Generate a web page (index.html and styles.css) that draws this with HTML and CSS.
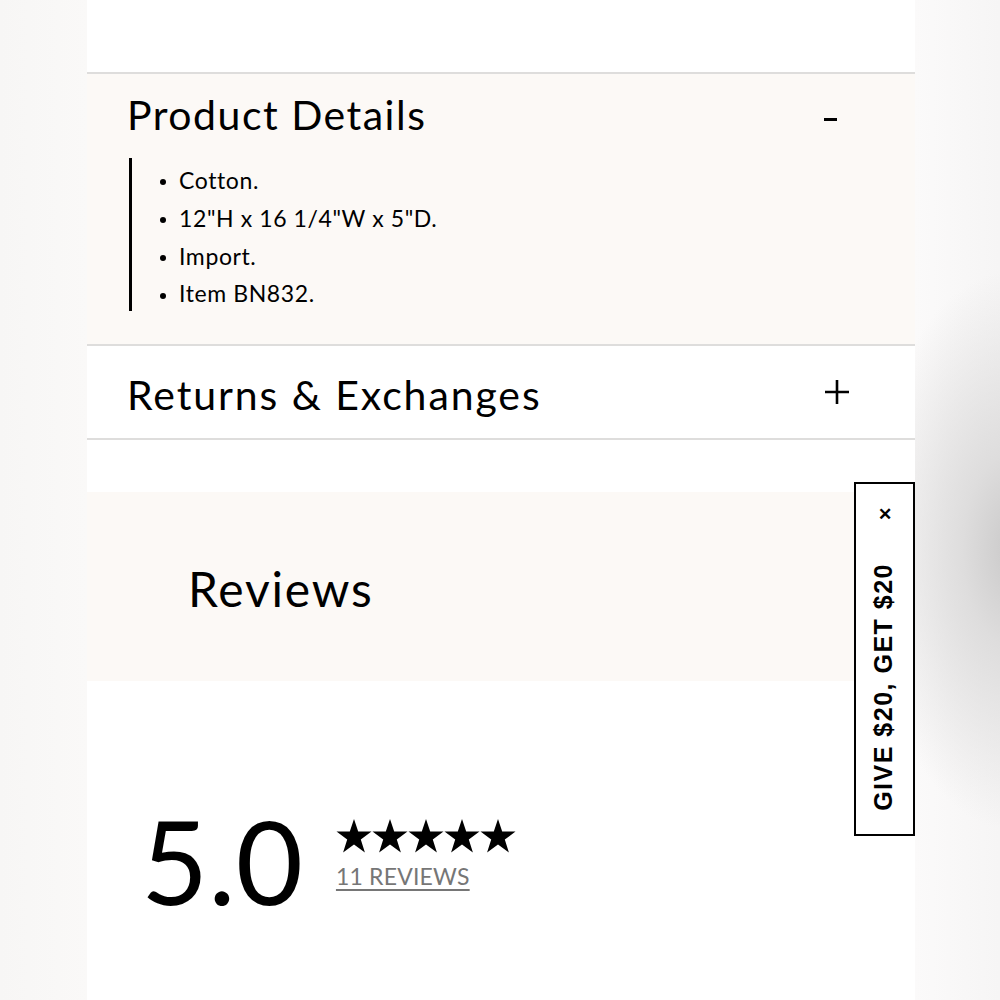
FILE: index.html
```html
<!DOCTYPE html>
<html>
<head>
<meta charset="utf-8">
<link rel="stylesheet" href="styles.css">
</head>
<body>
<div class="page">
  <div class="top"></div>
  <section class="acc open">
    <div class="acc-head">
      <h2 class="acc-title">Product Details</h2>
      <span class="minus"></span>
    </div>
    <div class="acc-body">
      <ul class="specs">
        <li>Cotton.</li>
        <li>12"H x 16 1/4"W x 5"D.</li>
        <li>Import.</li>
        <li>Item BN832.</li>
      </ul>
    </div>
  </section>
  <section class="acc closed">
    <div class="acc-head">
      <h2 class="acc-title">Returns &amp; Exchanges</h2>
      <svg class="plus" width="26" height="26" viewBox="0 0 26 26"><path d="M13 1V25M1 13H25" stroke="#000" stroke-width="2.6" fill="none"/></svg>
    </div>
  </section>
  <div class="gap"></div>
  <section class="reviews-head">
    <h2 class="reviews-title">Reviews</h2>
  </section>
  <section class="summary">
    <div class="score">5.0</div>
    <div class="rating">
      <div class="stars">
        <svg width="36" height="34" viewBox="0 0 36 34"><polygon points="18,0 22.2,12.6 35.5,12.6 24.8,20.5 28.9,33.5 18,25.5 7.1,33.5 11.2,20.5 0.5,12.6 13.8,12.6" fill="#000"/></svg>
        <svg width="36" height="34" viewBox="0 0 36 34"><polygon points="18,0 22.2,12.6 35.5,12.6 24.8,20.5 28.9,33.5 18,25.5 7.1,33.5 11.2,20.5 0.5,12.6 13.8,12.6" fill="#000"/></svg>
        <svg width="36" height="34" viewBox="0 0 36 34"><polygon points="18,0 22.2,12.6 35.5,12.6 24.8,20.5 28.9,33.5 18,25.5 7.1,33.5 11.2,20.5 0.5,12.6 13.8,12.6" fill="#000"/></svg>
        <svg width="36" height="34" viewBox="0 0 36 34"><polygon points="18,0 22.2,12.6 35.5,12.6 24.8,20.5 28.9,33.5 18,25.5 7.1,33.5 11.2,20.5 0.5,12.6 13.8,12.6" fill="#000"/></svg>
        <svg width="36" height="34" viewBox="0 0 36 34"><polygon points="18,0 22.2,12.6 35.5,12.6 24.8,20.5 28.9,33.5 18,25.5 7.1,33.5 11.2,20.5 0.5,12.6 13.8,12.6" fill="#000"/></svg>
      </div>
      <a class="count" href="#">11 REVIEWS</a>
    </div>
  </section>
</div>
<div class="promo">
  <span class="close">&#x2715;</span>
  <span class="promo-text">GIVE $20, GET $20</span>
</div>
</body>
</html>
```
FILE: styles.css
```css
html, body {
  margin: 0;
  padding: 0;
  height: 1000px;
  overflow: hidden;
}
body {
  font-family: Lato, "Noto Sans", sans-serif;
  color: #000;
  background:
    radial-gradient(ellipse 150px 280px at 1015px 550px, #c9c8c8 0%, #dedddd 35%, rgba(250,249,249,0) 100%),
    linear-gradient(90deg, #f7f6f5 0px, #faf9f8 87px, #fbfafa 915px, #f6f5f5 1000px);
}
.page {
  width: 828px;
  margin-left: 87px;
  background: #fff;
  height: 1000px;
}
.top {
  height: 72px;
}
.acc {
  border-top: 2px solid #dedddc;
}
.acc.open {
  background: #fcf9f6;
  padding-bottom: 33px;
}
.acc.closed {
  border-bottom: 2px solid #dedddc;
}
.acc-head {
  display: flex;
  align-items: center;
  justify-content: space-between;
  padding: 0 65px 0 40px;
}
.open .acc-head {
  height: 80px;
}
.closed .acc-head {
  height: 92px;
}
.acc-title {
  margin: 0;
  font-size: 41px;
  font-weight: 400;
  letter-spacing: 1.5px;
}
.closed .acc-title {
  letter-spacing: 1.9px;
  margin-top: 4px;
}
.minus {
  display: block;
  width: 13px;
  height: 3px;
  background: #000;
  margin-right: 13px;
  margin-top: 10px;
}
.plus {
  display: block;
}
.acc-body {
  padding-left: 42px;
  padding-top: 4px;
}
.specs {
  margin: 0;
  border-left: 3px solid #000;
  padding: 3px 0 0 28px;
  list-style: none;
}
.specs li {
  font-size: 23px;
  line-height: 38px;
  position: relative;
  padding-left: 19px;
  letter-spacing: 0.6px;
}
.specs li:last-child {
  line-height: 36px;
}
.specs li::before {
  content: "";
  position: absolute;
  left: 0;
  top: 18px;
  width: 6px;
  height: 6px;
  border-radius: 50%;
  background: #000;
}
.gap {
  height: 52px;
}
.reviews-head {
  background: #fcf9f6;
  height: 189px;
  display: flex;
  align-items: center;
  padding-left: 101px;
}
.reviews-title {
  margin: 4px 0 0;
  font-size: 48px;
  font-weight: 400;
  letter-spacing: 1.8px;
}
.summary {
  display: flex;
  align-items: flex-start;
  padding: 122px 0 0 54px;
}
.score {
  font-size: 116px;
  line-height: 116px;
  letter-spacing: 0;
}
.rating {
  margin-left: 33px;
  padding-top: 16px;
}
.stars {
  display: flex;
  gap: 0;
}
.stars svg {
  display: block;
}
.count {
  display: inline-block;
  margin-top: 9px;
  font-size: 23px;
  color: #767676;
  letter-spacing: 0.2px;
  text-decoration: underline;
  text-underline-offset: 4px;
  text-decoration-thickness: 2px;
}
.promo {
  position: fixed;
  top: 482px;
  left: 854px;
  width: 57px;
  height: 350px;
  border: 2px solid #000;
  background: #fff;
  display: flex;
  flex-direction: column;
  align-items: center;
  box-sizing: content-box;
}
.close {
  margin-top: 21px;
  font-family: "Liberation Sans", sans-serif;
  font-weight: 700;
  font-size: 17px;
  line-height: 20px;
}
.promo-text {
  margin-top: 38px;
  margin-left: -3px;
  writing-mode: vertical-rl;
  transform: rotate(180deg);
  font-family: "Liberation Sans", Arial, sans-serif;
  font-weight: 700;
  font-size: 25px;
  letter-spacing: 1.5px;
}
```
